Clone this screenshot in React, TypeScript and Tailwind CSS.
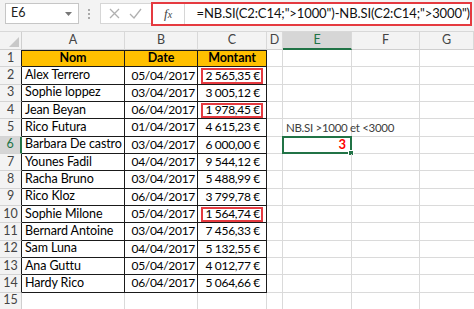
import React from "react";

const rows: [string, string, string][] = [
  ["Alex Terrero", "05/04/2017", "2 565,35 €"],
  ["Sophie loppez", "03/04/2017", "3 005,12 €"],
  ["Jean Beyan", "06/04/2017", "1 978,45 €"],
  ["Rico Futura", "01/04/2017", "4 615,23 €"],
  ["Barbara De castro", "03/04/2017", "6 000,00 €"],
  ["Younes Fadil", "04/04/2017", "9 544,12 €"],
  ["Racha Bruno", "03/04/2017", "5 488,99 €"],
  ["Rico Kloz", "06/04/2017", "3 799,78 €"],
  ["Sophie Milone", "05/04/2017", "1 564,74 €"],
  ["Bernard Antoine", "03/04/2017", "7 456,33 €"],
  ["Sam Luna", "04/04/2017", "5 132,55 €"],
  ["Ana Guttu", "05/04/2017", "4 012,77 €"],
  ["Hardy Rico", "06/04/2017", "5 064,66 €"],
];

const redRows = [2, 4, 10];

function Grid({ w }: { w: string }) {
  return <div className={`${w} h-full shrink-0 border-r border-b border-[#dadada]`} />;
}

export default function App() {
  const font = { fontFamily: "Lato, 'Open Sans', sans-serif" };
  return (
    <div className="w-[474px] h-[309px] overflow-hidden bg-white text-[12px] text-black whitespace-nowrap" style={font}>
      {/* formula bar */}
      <div className="h-[32px] bg-[#f3f3f3] flex items-start pt-[3px] border-b border-[#d8d8d8]">
        <div className="ml-[5px] w-[87px] h-[21px] bg-white border border-[#c6c6c6] flex items-center justify-between pl-[5px] pr-[6px]">
          <span className="text-[12.5px] text-[#222]">E6</span>
          <svg width="7" height="4" viewBox="0 0 7 4"><path d="M0 0h7L3.5 4z" fill="#777" /></svg>
        </div>
        <div className="w-[26px] h-[21px] flex flex-col items-center justify-center gap-[2px]">
          <span className="w-[2px] h-[2px] bg-[#aaa]" />
          <span className="w-[2px] h-[2px] bg-[#aaa]" />
          <span className="w-[2px] h-[2px] bg-[#aaa]" />
        </div>
        <div className="w-[60px] h-[21px] bg-white border border-[#d6d6d6] border-r-0 flex items-center justify-around px-[4px]">
          <svg width="11" height="11" viewBox="0 0 11 11"><path d="M1 1l9 9M10 1l-9 9" stroke="#b0b0b0" strokeWidth="1.3" /></svg>
          <svg width="13" height="11" viewBox="0 0 13 11"><path d="M1 6l4 4 7-9" stroke="#b0b0b0" strokeWidth="1.3" fill="none" /></svg>
        </div>
        <div className="flex-1 h-[24px] -mt-[1px] mr-[2px] border-2 border-[#e53a40] flex bg-white">
          <div className="w-[32px] h-full border-r border-[#d6d6d6] flex items-center justify-center">
            <span className="italic text-[13px] text-[#444]" style={{ fontFamily: "'Liberation Serif', serif" }}>f<span className="text-[10px]">x</span></span>
          </div>
          <div className="flex-1 flex items-center pl-[12px] text-[13px] text-[#111] tracking-[-0.1px]">
            =NB.SI(C2:C14;"&gt;1000")-NB.SI(C2:C14;"&gt;3000")
          </div>
        </div>
      </div>

      {/* column header */}
      <div className="flex h-[18px] bg-[#f3f3f3] text-[12.5px] text-[#444]">
        <div className="w-[22px] shrink-0 border-r border-b border-[#cfcfcf] relative">
          <svg className="absolute right-[2px] bottom-[2px]" width="10" height="10" viewBox="0 0 10 10"><path d="M10 0v10H0z" fill="#c8c8c8" /></svg>
        </div>
        {[
          ["A", "w-[103px]"],
          ["B", "w-[73px]"],
          ["C", "w-[69px]"],
          ["D", "w-[16px]"],
          ["E", "w-[69px]"],
          ["F", "w-[68px]"],
          ["G", "flex-1"],
        ].map(([l, w]) => (
          <div
            key={l}
            className={`${w} shrink-0 flex items-center justify-center border-r border-r-[#d9d9d9] ${l === "E" ? "bg-[#d6d6d6] border-b-2 border-b-[#217346] text-[#217346]" : "border-b border-b-[#cfcfcf]"}`}
          >
            {l}
          </div>
        ))}
      </div>

      {/* rows */}
      {Array.from({ length: 15 }, (_, i) => i + 1).map((r) => {
        const data = r >= 2 && r <= 14 ? rows[r - 2] : null;
        const isHeader = r === 1;
        const inTable = r <= 14;
        const sel = r === 6;
        const cellBorder = inTable ? "border-r border-b border-[#1a1a1a]" : "border-r border-b border-[#dadada]";
        const head = "bg-[#ffc000] justify-center font-bold border-t border-t-[#1a1a1a] text-[12.5px] tracking-[-0.1px]";
        return (
          <div key={r} className="flex h-[17.33px]">
            <div
              className={`w-[22px] shrink-0 flex items-center justify-center text-[12.5px] border-b border-b-[#d4d4d4] ${sel ? "bg-[#d6d6d6] text-[#217346] border-r-2 border-r-[#217346]" : inTable ? "bg-[#f3f3f3] text-[#444] border-r border-r-[#1a1a1a]" : "bg-[#f3f3f3] text-[#444] border-r border-r-[#cfcfcf]"}`}
            >
              {r}
            </div>
            <div className={`w-[103px] shrink-0 flex items-center overflow-hidden ${cellBorder} ${isHeader ? head : "pl-[3px] text-[12.5px] tracking-[-0.1px]"}`}>
              {isHeader ? "Nom" : data ? data[0] : ""}
            </div>
            <div className={`w-[73px] shrink-0 flex items-center overflow-hidden ${cellBorder} ${isHeader ? head : "justify-end pr-[2px] tracking-[-0.3px]"}`}>
              {isHeader ? "Date" : data ? data[1] : ""}
            </div>
            <div className={`w-[69px] shrink-0 relative flex items-center ${cellBorder} ${isHeader ? head : "justify-end pr-[6px] tracking-[-0.3px]"}`}>
              {isHeader ? "Montant" : data ? data[2] : ""}
              {redRows.includes(r) && (
                <div className="absolute left-[3px] right-[3px] top-[1px] bottom-[0px] border-2 border-[#e53a40]" />
              )}
            </div>
            <Grid w="w-[16px]" />
            <div className="w-[69px] shrink-0 relative border-r border-b border-[#dadada]">
              {r === 5 && (
                <span className="absolute left-[3px] top-0 h-full flex items-center text-[#404040] text-[11.5px] tracking-[-0.3px] z-10">
                  NB.SI &gt;1000 et &lt;3000
                </span>
              )}
              {sel && (
                <div className="absolute -left-[1px] -top-[1px] -right-[1px] -bottom-[1px] border-2 border-[#217346] flex items-center justify-end pr-[4px]">
                  <span className="text-[#ff0000] font-bold text-[13px]">3</span>
                  <span className="absolute -right-[4px] -bottom-[4px] w-[6px] h-[6px] bg-[#217346] border border-white" />
                </div>
              )}
            </div>
            <Grid w="w-[68px]" />
            <div className="flex-1 border-b border-[#dadada]" />
          </div>
        );
      })}
    </div>
  );
}
